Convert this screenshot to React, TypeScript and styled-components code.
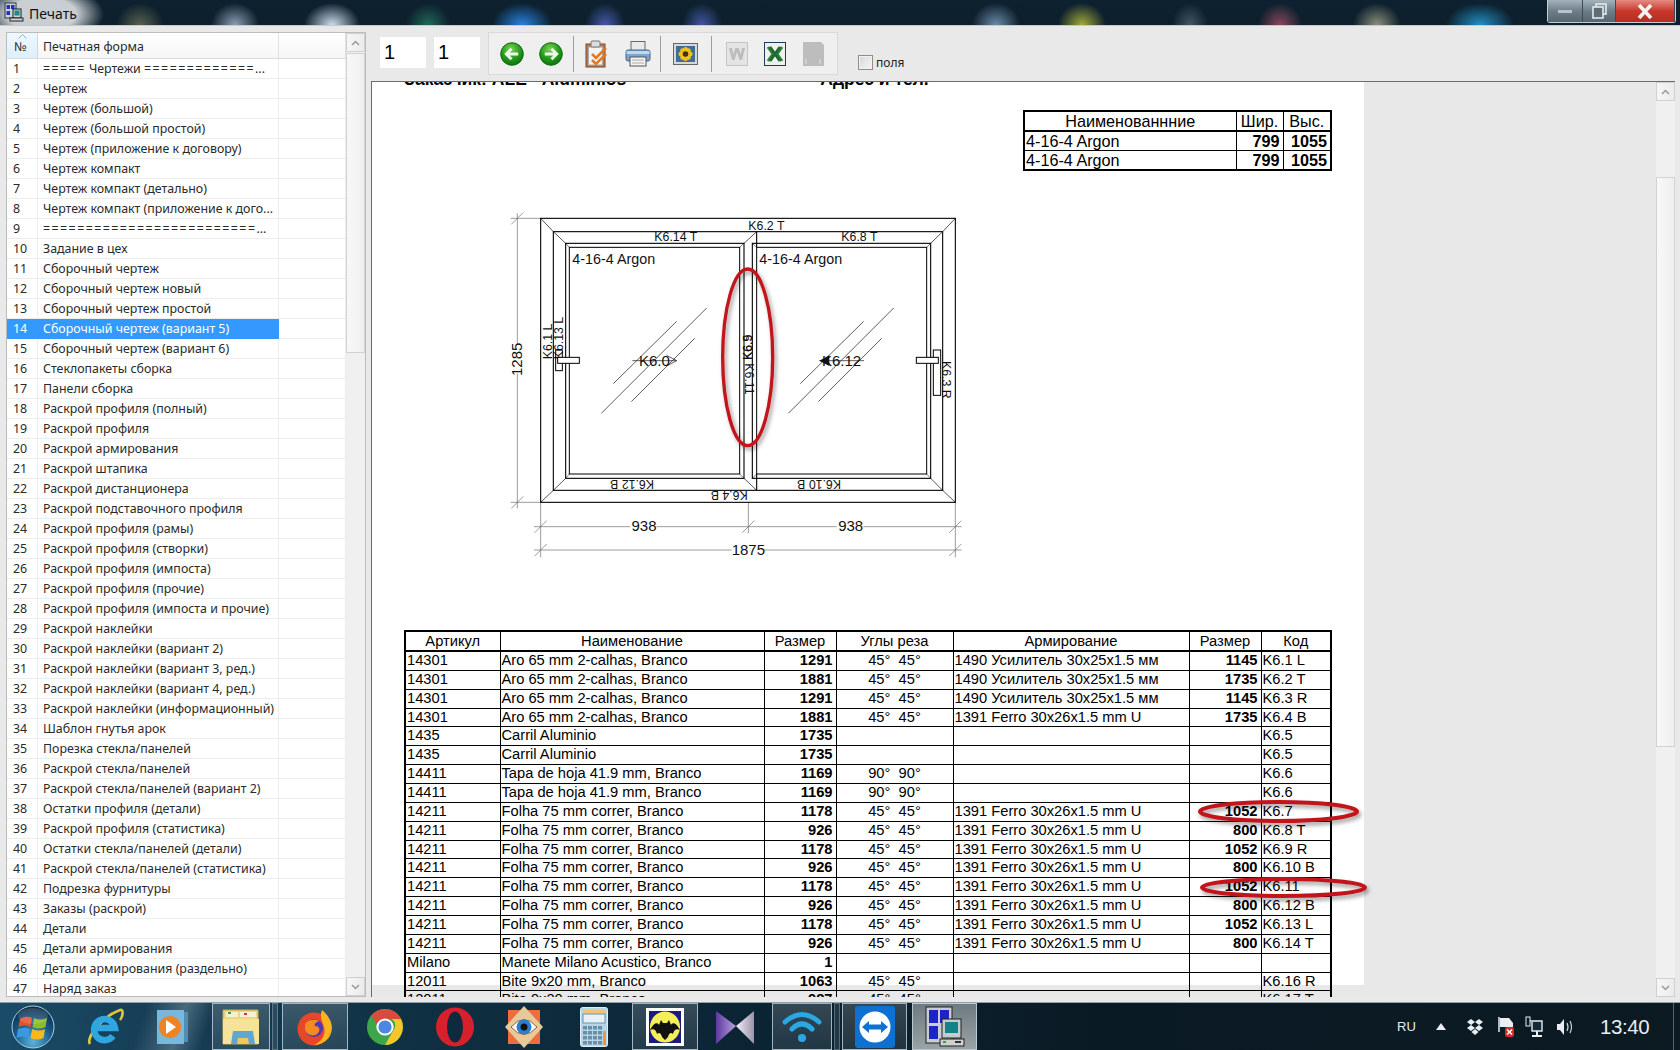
import React from "react";
import styled, { createGlobalStyle } from "styled-components";

const GlobalStyle = createGlobalStyle`
  html, body { margin: 0; padding: 0; width: 1680px; height: 1050px; overflow: hidden; background: #e9e9e9; }
  #root { width: 1680px; height: 1050px; }
  * { box-sizing: border-box; }
`;

const SANS = `"Liberation Sans", Arial, sans-serif`;
const UI = `"Noto Sans", "Liberation Sans", sans-serif`;

const blobs: [number, string, number][] = [
  [140, "rgba(150,150,110,.55)", 24],
  [235, "rgba(170,190,215,.8)", 24],
  [332, "rgba(215,232,248,.95)", 28],
  [428, "rgba(40,130,100,.75)", 22],
  [522, "rgba(40,130,225,1)", 30],
  [605, "rgba(80,100,190,.85)", 20],
  [702, "rgba(80,100,190,.8)", 20],
  [996, "rgba(130,165,200,.8)", 24],
  [1082, "rgba(190,195,60,.85)", 24],
  [1190, "rgba(90,110,125,.7)", 18],
  [1280, "rgba(170,80,105,.8)", 22],
  [1377, "rgba(170,170,145,.8)", 24],
  [1480, "rgba(35,150,205,.95)", 34],
];
const blobCss = blobs
  .map(([x, c, r]) => `radial-gradient(${r}px 22px at ${x}px 25px, ${c}, transparent)`)
  .join(",");

const Screen = styled.div`
  width: 1680px;
  height: 1050px;
  display: flex;
  flex-direction: column;
  overflow: hidden;
`;

const TitleBar = styled.header`
  height: 26px;
  flex: none;
  display: flex;
  align-items: flex-start;
  padding: 5px 4px 0 4px;
  border-bottom: 1px solid #c6cacc;
  background: radial-gradient(62px 30px at 42px 14px, rgba(205, 210, 214, 0.98) 55%, transparent), ${blobCss},
    linear-gradient(#0d2130, #0d1f2b);
`;
const TitleText = styled.span`
  font: 14px ${UI};
  line-height: 18px;
  color: #111;
  margin-left: 5px;
`;
const WindowControls = styled.div`
  margin: -5px 0 0 auto;
  display: flex;
  height: 23px;
  border: 1px solid #c5cdd3;
  border-top: none;
  border-radius: 0 0 3px 3px;
`;
const ControlButton = styled.div<{ $w: number; $kind: "plain" | "close" }>`
  width: ${(p) => p.$w}px;
  display: flex;
  align-items: center;
  justify-content: center;
  border-right: 1px solid #3b4a55;
  background: ${(p) =>
    p.$kind === "close"
      ? "linear-gradient(#e58a80, #c9382c 50%, #b92a20)"
      : "linear-gradient(#a5b2bb, #6d7e8a 50%, #55666f)"};
`;

const Workspace = styled.div`
  height: 976px;
  flex: none;
  display: flex;
  background: #e9e9e9;
`;

const ListPanel = styled.section`
  width: 360px;
  height: 965px;
  margin: 6px 0 0 6px;
  display: flex;
  border: 1px solid #bcbcbc;
  background: #fff;
  flex: none;
  overflow: hidden;
`;
const ListBody = styled.div`
  width: 339px;
  display: flex;
  flex-direction: column;
  font: 12.4px ${UI};
  color: #2a2a2a;
`;
const ListHeader = styled.div`
  height: 26px;
  flex: none;
  display: grid;
  grid-template-columns: 31px 241px 67px;
  border-bottom: 1px solid #dcdcdc;
`;
const HeaderCell = styled.div<{ $sorted?: boolean }>`
  position: relative;
  display: flex;
  align-items: center;
  padding-left: ${(p) => (p.$sorted ? 7 : 5)}px;
  padding-top: 1px;
  border-right: 1px solid ${(p) => (p.$sorted ? "#bcdcf2" : "#e2e2e2")};
  background: ${(p) =>
    p.$sorted ? "linear-gradient(#eef8ff, #dcf0fc)" : "linear-gradient(#fff, #f6f6f6)"};
`;
const SortMark = styled.svg`
  position: absolute;
  top: 1px;
  left: 11px;
`;
const ListRow = styled.div`
  height: 20px;
  flex: none;
  display: grid;
  grid-template-columns: 31px 241px 67px;
`;
const ListCell = styled.div<{ $selected?: boolean; $num?: boolean }>`
  padding-left: ${(p) => (p.$num ? 6 : 5)}px;
  line-height: 19px;
  white-space: nowrap;
  overflow: hidden;
  border-right: 1px solid ${(p) => (p.$selected ? "#3399ff" : "#ededed")};
  border-bottom: 1px solid ${(p) => (p.$selected ? "#3399ff" : "#ededed")};
  background: ${(p) => (p.$selected ? "#3399ff" : "#fff")};
  color: ${(p) => (p.$selected ? "#fff" : "inherit")};
`;
const EqualRun = styled.span`
  letter-spacing: 1.45px;
`;

const Scrollbar = styled.div<{ $w: number }>`
  width: ${(p) => p.$w}px;
  flex: none;
  display: flex;
  flex-direction: column;
  background: #f0f0f0;
`;
const ScrollButton = styled.div`
  height: 19px;
  flex: none;
  display: flex;
  align-items: center;
  justify-content: center;
  background: linear-gradient(90deg, #f6f6f6, #ebebeb);
  border: 1px solid #d0d0d0;
`;
const ScrollThumb = styled.div<{ $gap: number; $h: number }>`
  margin-top: ${(p) => p.$gap}px;
  height: ${(p) => p.$h}px;
  flex: none;
  background: linear-gradient(90deg, #f8f8f8, #efefef);
  border: 1px solid #d2d2d2;
`;
const ScrollTrack = styled.div`
  flex: 1;
`;

const RightColumn = styled.div`
  flex: 1;
  min-width: 0;
  display: flex;
  flex-direction: column;
`;
const Toolbar = styled.div`
  height: 55px;
  flex: none;
  display: flex;
  align-items: flex-start;
  padding: 6px 0 0 14px;
`;
const PageInput = styled.div<{ $gap: number }>`
  width: 46px;
  height: 31px;
  margin: 5px ${(p) => p.$gap}px 0 0;
  padding-left: 4px;
  display: flex;
  align-items: center;
  background: #fff;
  font: 20px ${SANS};
  color: #000;
`;
const ToolGroup = styled.div`
  width: 350px;
  height: 43px;
  margin-left: -2px;
  padding-left: 2px;
  display: flex;
  align-items: center;
  background: #efefef;
  border: 1px solid #d9d9d9;
`;
const ToolSlot = styled.div<{ $w: number }>`
  width: ${(p) => p.$w}px;
  height: 100%;
  display: flex;
  align-items: center;
  justify-content: center;
`;
const ToolSep = styled.div`
  width: 1px;
  height: 36px;
  background: #9c9c9c;
`;
const CheckWrap = styled.label`
  display: flex;
  align-items: center;
  gap: 3px;
  margin: 22px 0 0 20px;
  font: 12px ${UI};
  color: #222;
`;
const CheckBox = styled.span`
  width: 15px;
  height: 15px;
  border: 1px solid #8e8e8e;
  background: linear-gradient(135deg, #d8d8d8, #f6f6f6);
  box-shadow: inset 0 0 0 1px #f2f2f2;
`;

const DocArea = styled.div`
  height: 916px;
  margin-left: 5px;
  margin-right: 5px;
  display: flex;
  border-top: 1px solid #6b6b6b;
  border-left: 1px solid #6b6b6b;
`;
const PageViewport = styled.div`
  position: relative;
  flex: 1;
  min-width: 0;
  overflow: hidden;
  background: #e8e8e8;
`;
const Page = styled.div`
  width: 992px;
  height: 100%;
  padding-left: 32px;
  background: #fff;
`;
const ClippedHeading = styled.div`
  margin-top: -12px;
  height: 18px;
  display: flex;
  gap: 194px;
  font: bold 17.5px/18px ${SANS};
  color: #000;
  white-space: nowrap;
`;
const SmallTable = styled.table`
  margin: 22px 0 0 619px;
  width: 309px;
  table-layout: fixed;
  border-collapse: collapse;
  font: 16.2px/18px ${SANS};
  color: #000;
  border: 2px solid #000;
`;
const ReportHead = styled.th<{ $w?: number }>`
  width: ${(p) => (p.$w ? `${p.$w}px` : "auto")};
  height: 19px;
  padding: 0;
  font-weight: normal;
  text-align: center;
  border: 1px solid #000;
  border-bottom-width: 2px;
  white-space: nowrap;
  overflow: hidden;
`;
const ReportCell = styled.td<{ $bold?: boolean; $align?: "left" | "right" | "center" }>`
  height: 19px;
  padding: 0 ${(p) => (p.$bold ? 3 : 1)}px 0 1px;
  font-weight: ${(p) => (p.$bold ? "bold" : "normal")};
  text-align: ${(p) => p.$align ?? "left"};
  border: 1px solid #000;
  white-space: pre;
  overflow: hidden;
`;
const ReportRow = styled.tr<{ $short?: boolean }>`
  & td {
    height: ${(p) => (p.$short ? 18 : 19)}px;
  }
`;
const Drawing = styled.svg`
  display: block;
  margin: 29px 0 0 86px;
  overflow: visible;
`;
const DrawingText = styled.text<{ $size: number }>`
  font-family: ${SANS};
  font-size: ${(p) => p.$size}px;
  fill: #111;
`;
const MainTable = styled.table`
  margin-top: 60px;
  width: 926px;
  table-layout: fixed;
  border-collapse: collapse;
  font: 14.7px/17px ${SANS};
  color: #000;
  border: 2px solid #000;
  & th {
    height: 20px;
  }
`;
const RedMark = styled.svg<{ $x: number; $y: number }>`
  position: absolute;
  left: ${(p) => p.$x}px;
  top: ${(p) => p.$y}px;
  overflow: visible;
  filter: drop-shadow(2px 3px 2px rgba(0, 0, 0, 0.4));
`;

const Taskbar = styled.footer`
  height: 48px;
  flex: none;
  display: flex;
  align-items: stretch;
  border-top: 1px solid #8fa1ad;
  background: linear-gradient(108deg, transparent 140px, rgba(170, 190, 200, 0.35) 178px, transparent 205px),
    linear-gradient(90deg, #1a4c68 0, #174059 120px, #0f3042 420px, #0b2434 760px, #0a1a24 1100px, #0c1a22 1680px);
`;
const TaskItem = styled.div<{ $w: number; $ml?: number; $state?: "active" | "open" }>`
  width: ${(p) => p.$w}px;
  margin-left: ${(p) => p.$ml ?? 0}px;
  flex: none;
  display: flex;
  align-items: center;
  justify-content: center;
  border: ${(p) => (p.$state ? "1px solid rgba(205,220,228,.75)" : "1px solid transparent")};
  background: ${(p) =>
    p.$state === "active"
      ? "linear-gradient(#6d7a80, #9aa3a6)"
      : p.$state === "open"
        ? "linear-gradient(rgba(255,255,255,.17), rgba(255,255,255,.09))"
        : "none"};
`;
const TaskGrip = styled.div<{ $ml: number }>`
  width: 6px;
  margin-left: ${(p) => p.$ml}px;
  flex: none;
  border: 1px solid rgba(190, 205, 215, 0.35);
  background: rgba(255, 255, 255, 0.1);
`;
const Tray = styled.div`
  margin-left: auto;
  display: flex;
  align-items: center;
  color: #e8eef2;
`;
const TrayLang = styled.span`
  font: 13px ${SANS};
  width: 36px;
`;
const TrayIcon = styled.span<{ $w: number; $ml?: number }>`
  width: ${(p) => p.$w}px;
  margin-left: ${(p) => p.$ml ?? 0}px;
  display: flex;
  justify-content: center;
`;
const Clock = styled.time`
  width: 75px;
  font: 20.5px ${SANS};
  letter-spacing: -0.4px;
  padding-left: 25px;
  margin-right: 23px;
  white-space: nowrap;
`;
const ShowDesktop = styled.div`
  width: 7px;
  align-self: stretch;
  border-left: 1px solid #55656f;
`;

const listItems = [
  "===== Чертежи =============...",
  "Чертеж",
  "Чертеж (большой)",
  "Чертеж (большой простой)",
  "Чертеж (приложение к договору)",
  "Чертеж компакт",
  "Чертеж компакт (детально)",
  "Чертеж компакт (приложение к дого...",
  "=========================...",
  "Задание в цех",
  "Сборочный чертеж",
  "Сборочный чертеж новый",
  "Сборочный чертеж простой",
  "Сборочный чертеж (вариант 5)",
  "Сборочный чертеж (вариант 6)",
  "Стеклопакеты сборка",
  "Панели сборка",
  "Раскрой профиля (полный)",
  "Раскрой профиля",
  "Раскрой армирования",
  "Раскрой штапика",
  "Раскрой дистанционера",
  "Раскрой подставочного профиля",
  "Раскрой профиля (рамы)",
  "Раскрой профиля (створки)",
  "Раскрой профиля (импоста)",
  "Раскрой профиля (прочие)",
  "Раскрой профиля (импоста и прочие)",
  "Раскрой наклейки",
  "Раскрой наклейки (вариант 2)",
  "Раскрой наклейки (вариант 3, ред.)",
  "Раскрой наклейки (вариант 4, ред.)",
  "Раскрой наклейки (информационный)",
  "Шаблон гнутья арок",
  "Порезка стекла/панелей",
  "Раскрой стекла/панелей",
  "Раскрой стекла/панелей (вариант 2)",
  "Остатки профиля (детали)",
  "Раскрой профиля (статистика)",
  "Остатки стекла/панелей (детали)",
  "Раскрой стекла/панелей (статистика)",
  "Подрезка фурнитуры",
  "Заказы (раскрой)",
  "Детали",
  "Детали армирования",
  "Детали армирования (раздельно)",
  "Наряд заказ",
];

const A65 = "Aro 65 mm 2-calhas, Branco";
const F75 = "Folha 75 mm correr, Branco";
const TAP = "Tapa de hoja 41.9 mm, Branco";
const USI = "1490 Усилитель 30x25x1.5 мм";
const FER = "1391 Ferro 30x26x1.5 mm U";
const ANG = "45°  45°";
const ANG9 = "90°  90°";
const rows: string[][] = [
  ["14301", A65, "1291", ANG, USI, "1145", "K6.1 L"],
  ["14301", A65, "1881", ANG, USI, "1735", "K6.2 T"],
  ["14301", A65, "1291", ANG, USI, "1145", "K6.3 R"],
  ["14301", A65, "1881", ANG, FER, "1735", "K6.4 B"],
  ["1435", "Carril Aluminio", "1735", "", "", "", "K6.5"],
  ["1435", "Carril Aluminio", "1735", "", "", "", "K6.5"],
  ["14411", TAP, "1169", ANG9, "", "", "K6.6"],
  ["14411", TAP, "1169", ANG9, "", "", "K6.6"],
  ["14211", F75, "1178", ANG, FER, "1052", "K6.7"],
  ["14211", F75, "926", ANG, FER, "800", "K6.8 T"],
  ["14211", F75, "1178", ANG, FER, "1052", "K6.9 R"],
  ["14211", F75, "926", ANG, FER, "800", "K6.10 B"],
  ["14211", F75, "1178", ANG, FER, "1052", "K6.11"],
  ["14211", F75, "926", ANG, FER, "800", "K6.12 B"],
  ["14211", F75, "1178", ANG, FER, "1052", "K6.13 L"],
  ["14211", F75, "926", ANG, FER, "800", "K6.14 T"],
  ["Milano", "Manete Milano Acustico, Branco", "1", "", "", "", ""],
  ["12011", "Bite 9x20 mm, Branco", "1063", ANG, "", "", "K6.16 R"],
  ["12011", "Bite 9x20 mm, Branco", "987", ANG, "", "", "K6.17 T"],
];
const heads: [string, number][] = [
  ["Артикул", 95],
  ["Наименование", 264],
  ["Размер", 72],
  ["Углы реза", 117],
  ["Армирование", 236],
  ["Размер", 72],
  ["Код", 70],
];

const Chevron = ({ up }: { up?: boolean }) => (
  <svg width="9" height="6" viewBox="0 0 9 6">
    <path d={up ? "M1 5 L4.5 1.5 L8 5" : "M1 1 L4.5 4.5 L8 1"} fill="none" stroke="#9a9a9a" strokeWidth="1.5" />
  </svg>
);

const TitleIcon = () => (
  <svg width="20" height="20" viewBox="0 0 20 20" style={{ marginTop: -3 }}>
    <rect x="1" y="1" width="11" height="15" fill="#cfd4d8" stroke="#333" />
    <rect x="2.5" y="3" width="3.5" height="4" fill="#2030c8" />
    <rect x="7" y="3" width="3.5" height="4" fill="#2030c8" />
    <rect x="2.5" y="9" width="3.5" height="4" fill="#2030c8" />
    <rect x="9" y="7" width="8" height="9" fill="#c8d0d4" stroke="#222" />
    <rect x="10.5" y="8.5" width="5" height="5" fill="#188a90" />
    <rect x="6" y="16" width="13" height="3" fill="#d4d4d4" stroke="#222" />
  </svg>
);

const ArrowBall = ({ dir }: { dir: "l" | "r" }) => (
  <svg width="24" height="24" viewBox="0 0 25 25">
    <defs>
      <radialGradient id={`gb${dir}`} cx="45%" cy="30%" r="75%">
        <stop offset="0" stopColor="#7ed35a" />
        <stop offset="0.55" stopColor="#259a1c" />
        <stop offset="1" stopColor="#0a6d10" />
      </radialGradient>
    </defs>
    <circle cx="12.5" cy="12.5" r="11.8" fill={`url(#gb${dir})`} stroke="#0f6b12" />
    <path
      d={dir === "l" ? "M19 12.5 H7.5 M12 7 L6.5 12.5 L12 18" : "M6 12.5 H17.5 M13 7 L18.5 12.5 L13 18"}
      fill="none"
      stroke="#eef8e8"
      strokeWidth="3"
    />
  </svg>
);
const ClipboardIcon = () => (
  <svg width="26" height="30" viewBox="0 0 26 30">
    <rect x="2" y="5" width="19" height="23" fill="#b87a50" stroke="#7a4a2c" />
    <rect x="4.5" y="8" width="14" height="18" fill="#f2f2f2" stroke="#a8a8a8" />
    <rect x="7" y="2" width="9" height="6" rx="1" fill="#dcdcdc" stroke="#777" />
    <path d="M8 15 L12 19 L22 9 M8 21 L12 25 L22 15" fill="none" stroke="#e07a28" strokeWidth="2.6" />
  </svg>
);
const PrinterIcon = () => (
  <svg width="26" height="28" viewBox="0 0 26 28">
    <rect x="6" y="1.5" width="14" height="10" fill="#e9e9e9" stroke="#666" />
    <rect x="1" y="10" width="24" height="11" rx="2" fill="#7fa6c8" stroke="#40688c" />
    <rect x="1.5" y="11" width="23" height="3" fill="#c3d7e8" />
    <rect x="5" y="17" width="16" height="9" fill="#f4f4f4" stroke="#555" />
    <path d="M7 20 H19 M7 23 H19" stroke="#aaa" />
  </svg>
);
const SunflowerIcon = () => (
  <svg width="25" height="22" viewBox="0 0 25 22">
    <rect x="0.5" y="0.5" width="24" height="21" fill="#d8d8d8" stroke="#666" />
    <rect x="3" y="3" width="19" height="16" fill="#406c95" />
    <g fill="#f2c316">
      <circle cx="12.5" cy="6.5" r="2.5" />
      <circle cx="12.5" cy="15.5" r="2.5" />
      <circle cx="8" cy="11" r="2.5" />
      <circle cx="17" cy="11" r="2.5" />
      <circle cx="9.5" cy="7.5" r="2.3" />
      <circle cx="15.5" cy="7.5" r="2.3" />
      <circle cx="9.5" cy="14.5" r="2.3" />
      <circle cx="15.5" cy="14.5" r="2.3" />
    </g>
    <circle cx="12.5" cy="11" r="2.8" fill="#4a3016" />
  </svg>
);
const WordOff = () => (
  <svg width="22" height="24" viewBox="0 0 22 24">
    <rect x="0.5" y="0.5" width="21" height="23" fill="#e4e4e4" stroke="#c4c4c4" />
    <path d="M3 6 L6 18 H8.5 L11 10 L13.5 18 H16 L19 6 H16 L14.8 12 L12.5 6 H9.5 L7.2 12 L6 6 Z" fill="#bdbdbd" />
  </svg>
);
const ExcelIcon = () => (
  <svg width="22" height="24" viewBox="0 0 22 24">
    <rect x="0.5" y="0.5" width="21" height="23" fill="#eef2ee" stroke="#1e3a5c" />
    <path d="M4 5 L9 12 L4 19 M18 5 L13 12 L18 19" fill="none" stroke="#38803c" strokeWidth="3" />
    <path d="M6 5 L16 19 M16 5 L6 19" stroke="#1f6a33" strokeWidth="3" />
  </svg>
);
const DiskOff = () => (
  <svg width="21" height="25" viewBox="0 0 21 25">
    <path d="M0 1 H18 L21 4 V25 H0 Z" fill="#bdbdbd" />
    <path d="M3 18 V23 M17 18 V23" stroke="#e0e0e0" />
  </svg>
);

const StartOrb = () => (
  <svg width="44" height="44" viewBox="0 0 44 44">
    <defs>
      <radialGradient id="orb" cx="50%" cy="85%" r="80%">
        <stop offset="0" stopColor="#5bb4dc" />
        <stop offset="0.55" stopColor="#1c5c8c" />
        <stop offset="1" stopColor="#0c2c48" />
      </radialGradient>
    </defs>
    <circle cx="22" cy="22" r="21" fill="url(#orb)" stroke="#a9d0e4" strokeWidth="1" />
    <path d="M9 14 Q15 10 21 13 L19.5 22 Q14 19 7.5 22 Z" fill="#e8502c" />
    <path d="M23 13 Q29 16 36 13 L34.5 22 Q28 25 21.5 22 Z" fill="#8ebc2a" />
    <path d="M7 24 Q14 21 19 24 L17.5 33 Q11 30 5.5 33 Z" fill="#3a9ae0" />
    <path d="M21 24 Q28 27 34 24 L32.5 33 Q26 36 19.5 33 Z" fill="#f5b81e" />
    <ellipse cx="22" cy="11" rx="15" ry="8" fill="rgba(255,255,255,.14)" />
  </svg>
);
const IeIcon = () => (
  <svg width="40" height="40" viewBox="0 0 40 40">
    <path d="M5 37 C1 31 16 10 35 3 C39 2 38 9 35 13" fill="none" stroke="#e0c43a" strokeWidth="2.6" />
    <path d="M11 21 H30 A10.5 10.5 0 1 0 28 29" fill="none" stroke="#2ea7e0" strokeWidth="6.5" />
  </svg>
);
const WmpIcon = () => (
  <svg width="34" height="36" viewBox="0 0 34 36">
    <rect x="28" y="3" width="5" height="30" fill="#4e90b4" />
    <rect x="2" y="1" width="27" height="34" fill="#79b8dc" />
    <circle cx="15" cy="18" r="11" fill="#ec8426" />
    <path d="M11 11 L21 18 L11 25 Z" fill="#fff" />
  </svg>
);
const FolderIcon = () => (
  <svg width="42" height="40" viewBox="0 0 42 40">
    <path d="M3 3 H38 V37 H3 Z" fill="#eed680" stroke="#c5a850" />
    <rect x="6" y="5" width="12" height="5" fill="#f5f1d8" />
    <rect x="20" y="5" width="16" height="5" fill="#f5f1d8" />
    <rect x="8" y="5" width="3" height="2" fill="#3ca03c" />
    <rect x="24" y="6" width="3" height="2" fill="#d83030" />
    <path d="M3 12 H39 V37 H3 Z" fill="#f6e39a" />
    <path d="M11 37 L13 24 H33 L35 37" fill="#5fa6d4" />
    <path d="M17 37 L18 31 H28 L29 37" fill="#eec95a" />
  </svg>
);
const FirefoxIcon = () => (
  <svg width="38" height="38" viewBox="0 0 38 38">
    <circle cx="18" cy="21" r="16.5" fill="#e8462a" />
    <path d="M26 2 C33 8 38 16 35 25 C33 33 24 37 18 37 C27 33 31 25 27 16 C25 11 24 6 26 2 Z" fill="#f9b41f" />
    <circle cx="18" cy="20" r="9" fill="#4d3bb4" />
    <path d="M9 16 C12 11 20 11 23 13 C20 14 18 16 19 18 C24 18 25 23 21 26 C17 29 11 27 9 22 Z" fill="#f58a1e" />
  </svg>
);
const ChromeIcon = () => (
  <svg width="38" height="38" viewBox="0 0 38 38">
    <circle cx="19" cy="19" r="18" fill="#3ea64a" />
    <path d="M19 1 A18 18 0 0 1 35 11 H19 A8 8 0 0 0 11.5 16 L5 8 A18 18 0 0 1 19 1 Z" fill="#d94c3d" />
    <path d="M35 11 A18 18 0 0 1 19 37 L27 23 A8 8 0 0 0 26 11 Z" fill="#f5c52c" />
    <circle cx="19" cy="19" r="8.6" fill="#fff" />
    <circle cx="19" cy="19" r="6.6" fill="#4b88e6" />
  </svg>
);
const OperaIcon = () => (
  <svg width="40" height="40" viewBox="0 0 40 40">
    <ellipse cx="20" cy="20" rx="19" ry="19.5" fill="#d7202c" />
    <ellipse cx="20" cy="20" rx="8" ry="15.5" fill="#0f2a3c" />
  </svg>
);
const EyeIcon = () => (
  <svg width="40" height="42" viewBox="0 0 40 42">
    <rect x="4" y="4" width="32" height="34" fill="#ee6c3e" />
    <path d="M20 0 L39 21 L20 42 L1 21 Z" fill="#e8c998" />
    <path d="M7 21 Q20 6 33 21 Q20 36 7 21 Z" fill="#fff" stroke="#8a5a2c" />
    <circle cx="20" cy="21" r="7.5" fill="#2c7fd0" />
    <circle cx="20" cy="21" r="3.5" fill="#111" />
  </svg>
);
const CalcIcon = () => (
  <svg width="28" height="40" viewBox="0 0 28 40">
    <rect x="0.5" y="0.5" width="27" height="39" rx="2" fill="#b5d6e8" stroke="#e0eef5" />
    <rect x="3" y="3" width="22" height="3" fill="#f3c27a" />
    <rect x="3" y="7" width="22" height="9" fill="#e6f1f7" stroke="#6b93ab" />
    <g fill="#6a8ea6">
      {[19, 24, 29, 34].flatMap((y) =>
        [3, 8, 13, 18].map((x) => <rect key={`${x}-${y}`} x={x} y={y} width="4" height="3.5" />)
      )}
    </g>
    <rect x="23" y="24" width="3" height="14" fill="#ec9a3c" />
  </svg>
);
const BatIcon = () => (
  <svg width="38" height="38" viewBox="0 0 38 38">
    <rect x="0" y="0" width="38" height="38" fill="#fff" />
    <rect x="3" y="3" width="32" height="32" fill="#1a1a80" />
    <ellipse cx="19" cy="19" rx="15" ry="15.5" fill="#f4ee5a" />
    <path d="M4 22 C8 14 12 14 13 17 L15 12 L17 15 H21 L23 12 L25 17 C26 14 30 14 34 22 C30 20 28 22 27 26 C25 24 23 25 22 29 L19 32 L16 29 C15 25 13 24 11 26 C10 22 8 20 4 22 Z" fill="#111" />
  </svg>
);
const VsIcon = () => (
  <svg width="40" height="38" viewBox="0 0 40 38">
    <defs>
      <linearGradient id="vsl" x1="0" x2="1">
        <stop offset="0" stopColor="#5c3aa0" />
        <stop offset="1" stopColor="#b8a0dc" />
      </linearGradient>
      <linearGradient id="vsr" x1="0" x2="1">
        <stop offset="0" stopColor="#f2eef8" />
        <stop offset="1" stopColor="#9c92aa" />
      </linearGradient>
    </defs>
    <path d="M1 3 L21 18 L1 36 Z" fill="url(#vsl)" />
    <path d="M39 3 L21 18 L39 36 Z" fill="url(#vsr)" />
  </svg>
);
const WifiIcon = () => (
  <svg width="40" height="34" viewBox="0 0 40 34">
    <path d="M3 12 Q20 -3 37 12 M10 19 Q20 9 30 19" fill="none" stroke="#2aa8e4" strokeWidth="5" strokeLinecap="round" />
    <circle cx="20" cy="28" r="4" fill="#2aa8e4" />
  </svg>
);
const TeamViewerIcon = () => (
  <svg width="40" height="42" viewBox="0 0 40 42">
    <rect x="0" y="0" width="40" height="42" rx="3" fill="#0e70d1" />
    <circle cx="20" cy="21" r="15.5" fill="#fff" />
    <path d="M7 21 L14 15 V18.5 H26 V15 L33 21 L26 27 V23.5 H14 V27 Z" fill="#0e70d1" />
  </svg>
);
const ComputerIcon = () => (
  <svg width="42" height="42" viewBox="0 0 42 42">
    <rect x="2" y="1" width="26" height="36" fill="#c9cdd0" stroke="#222" />
    <rect x="5" y="4" width="9" height="13" fill="#1c24c8" />
    <rect x="16" y="4" width="9" height="13" fill="#1c24c8" />
    <rect x="5" y="20" width="9" height="13" fill="#1c24c8" />
    <rect x="18" y="13" width="19" height="19" fill="#c5cbce" stroke="#222" />
    <rect x="21" y="16" width="13" height="11" fill="#128488" />
    <rect x="16" y="33" width="24" height="7" fill="#d0d0d0" stroke="#222" />
    <rect x="31" y="35" width="6" height="2" fill="#333" />
    <rect x="19" y="35" width="3" height="2" fill="#38a038" />
  </svg>
);

const TrayDropbox = () => (
  <svg width="18" height="18" viewBox="0 0 18 18" fill="#e8eef2">
    <path d="M5 1 L9 4 L5 7 L1 4 Z M13 1 L17 4 L13 7 L9 4 Z M5 7 L9 10 L5 13 L1 10 Z M13 7 L17 10 L13 13 L9 10 Z M9 11 L12.5 14 L9 17 L5.5 14 Z" />
  </svg>
);
const TrayFlag = () => (
  <svg width="18" height="22" viewBox="0 0 18 22">
    <path d="M2 1 V16" stroke="#e8eef2" strokeWidth="1.5" />
    <path d="M3 2 H12 L16 7 V11 H3 Z" fill="#e8eef2" />
    <rect x="8" y="11" width="9" height="10" rx="2" fill="#d32a2a" />
    <path d="M10 13.5 L15 18.5 M15 13.5 L10 18.5" stroke="#fff" strokeWidth="1.5" />
  </svg>
);
const TrayNet = () => (
  <svg width="20" height="22" viewBox="0 0 20 22">
    <rect x="2" y="1" width="4" height="9" fill="none" stroke="#e8eef2" />
    <path d="M6 5 H18 V15 H8 V6" fill="#152a36" stroke="#e8eef2" strokeWidth="1.4" />
    <path d="M13 15 V19 M8 20 H18" stroke="#e8eef2" strokeWidth="2" />
  </svg>
);
const TraySound = () => (
  <svg width="20" height="22" viewBox="0 0 20 22" fill="none">
    <path d="M3 8 H6 L10 3 V19 L6 14 H3 Z" fill="#e8eef2" />
    <path d="M13 7 Q15 11 13 15 M16 5 Q19 11 16 17" stroke="#c8d2d8" strokeWidth="1.2" />
  </svg>
);

const WindowDrawing = () => {
  const dim = "#6a6a6a";
  const ticks: [number, number][] = [
    [82, 55], [82, 907],
    [152, 980], [775, 980], [1396, 980],
    [152, 1050], [1396, 1050],
  ];
  return (
    <Drawing width="500" height="370" viewBox="0 0 1500 1110">
      <defs>
        <filter id="markShadow" x="-30%" y="-10%" width="160%" height="120%">
          <feDropShadow dx="6" dy="8" stdDeviation="6" floodColor="#000" floodOpacity="0.4" />
        </filter>
      </defs>
      <g stroke={dim} strokeWidth="2" fill="none">
        <path d="M62 55 H152 M62 907 H152" />
        <path d="M82 40 V435 M82 520 V925" />
        <path d="M152 907 V1072 M775 907 V1000 M1396 907 V1072" />
        <path d="M132 980 H420 M500 980 H1040 M1120 980 H1415" />
        <path d="M132 1050 H725 M822 1050 H1415" />
        {ticks.map(([x, y]) => (
          <path key={`${x}-${y}`} d={`M${x - 18} ${y + 18} L${x + 18} ${y - 18}`} />
        ))}
      </g>
      <g stroke="#000" strokeWidth="3.3" fill="none">
        <rect x="152" y="55" width="1244" height="852" />
        <rect x="190" y="95" width="1168" height="776" />
        <rect x="227" y="130" width="535" height="705" />
        <rect x="238" y="142" width="511" height="680" strokeWidth="3" />
        <rect x="787" y="130" width="535" height="705" />
        <rect x="800" y="142" width="510" height="680" strokeWidth="3" />
        <path d="M800 95 V142 M800 822 V871" />
        <path d="M152 55 L190 95 M1396 55 L1358 95 M152 907 L190 871 M1396 907 L1358 871" strokeWidth="2" />
        <path d="M190 95 L227 130 M190 871 L227 835 M800 95 L762 130 M800 871 L762 835 M1358 95 L1322 130 M1358 871 L1322 835" strokeWidth="2" />
        <path d="M227 130 L238 142 M227 835 L238 822 M762 130 L749 142 M762 835 L749 822 M787 130 L800 142 M787 835 L800 822 M1322 130 L1310 142 M1322 835 L1310 822" strokeWidth="1.5" />
      </g>
      <g stroke="#222" strokeWidth="2.2" fill="none">
        <path d="M334 640 L650 324 M370 551 L560 364 M424 605 L614 415" />
        <path d="M895 640 L1211 324 M931 551 L1121 364 M985 605 L1175 415" />
        <path d="M427 482 H560 M530 466 L560 482 L530 498" />
        <path d="M988 482 H1122" />
      </g>
      <path d="M988 482 L1018 466 V498 Z" fill="#111" />
      <DrawingText $size={43} x="247" y="191">4-16-4 Argon</DrawingText>
      <DrawingText $size={43} x="808" y="191">4-16-4 Argon</DrawingText>
      <DrawingText $size={45} x="447" y="498">K6.0</DrawingText>
      <DrawingText $size={45} x="996" y="498">K6.12</DrawingText>
      <DrawingText $size={37} x="775" y="89">K6.2 T</DrawingText>
      <DrawingText $size={37} x="493" y="123">K6.14 T</DrawingText>
      <DrawingText $size={37} x="1054" y="123">K6.8 T</DrawingText>
      <DrawingText $size={37} transform="rotate(180 492 852)" x="492" y="864">K6.12 B</DrawingText>
      <DrawingText $size={37} transform="rotate(180 1053 852)" x="1053" y="864">K6.10 B</DrawingText>
      <DrawingText $size={37} transform="rotate(180 773 885)" x="773" y="897">K6.4 B</DrawingText>
      <DrawingText $size={37} transform="rotate(-90 186 478)" x="186" y="478">K6.1 L</DrawingText>
      <DrawingText $size={37} transform="rotate(-90 218 478)" x="218" y="478">K6.13 L</DrawingText>
      <DrawingText $size={37} transform="rotate(90 1355 483)" x="1355" y="483">K6.3 R</DrawingText>
      <DrawingText $size={37} transform="rotate(90 765 490)" x="765" y="490">K6.11</DrawingText>
      <DrawingText $size={37} transform="rotate(-90 785 480)" x="785" y="480">K6.9</DrawingText>
      <DrawingText $size={37} transform="rotate(-90 787 480)" x="787" y="480">K6.5</DrawingText>
      <g stroke="#000" strokeWidth="3" fill="#fff">
        <rect x="197" y="450" width="20" height="62" fillOpacity="0" />
        <rect x="203" y="472" width="65" height="18" />
        <rect x="1330" y="450" width="22" height="136" fillOpacity="0" />
        <rect x="1279" y="472" width="66" height="18" />
      </g>
      <DrawingText $size={45} transform="rotate(-90 97 478)" x="97" y="478" textAnchor="middle">1285</DrawingText>
      <DrawingText $size={45} x="462" y="994" textAnchor="middle">938</DrawingText>
      <DrawingText $size={45} x="1082" y="994" textAnchor="middle">938</DrawingText>
      <DrawingText $size={45} x="775" y="1065" textAnchor="middle">1875</DrawingText>
      <ellipse cx="773" cy="472" rx="75" ry="265" fill="none" stroke="#c3141b" strokeWidth="10" filter="url(#markShadow)" />
    </Drawing>
  );
};

const TableMark = ({ x, y, w, h }: { x: number; y: number; w: number; h: number }) => (
  <RedMark $x={x} $y={y} width={w} height={h} viewBox={`0 0 ${w} ${h}`}>
    <ellipse cx={w / 2} cy={h / 2} rx={w / 2 - 2} ry={h / 2 - 2} fill="none" stroke="#c3141b" strokeWidth="4" />
  </RedMark>
);

const tools: { w: number; el?: React.ReactNode }[] = [
  { w: 43, el: <ArrowBall dir="l" /> },
  { w: 35, el: <ArrowBall dir="r" /> },
  { w: 4, el: <></> },
  { w: 0 },
  { w: 47, el: <ClipboardIcon /> },
  { w: 36, el: <PrinterIcon /> },
  { w: 4, el: <></> },
  { w: 0 },
  { w: 50, el: <SunflowerIcon /> },
  { w: 0 },
  { w: 50, el: <WordOff /> },
  { w: 28, el: <ExcelIcon /> },
  { w: 48, el: <DiskOff /> },
];

const ListLabel = ({ text }: { text: string }) => (
  <>
    {text.split(/(=+)/).map((part, i) =>
      part.startsWith("=") ? <EqualRun key={i}>{part}</EqualRun> : part
    )}
  </>
);

export default function App() {
  return (
    <>
      <GlobalStyle />
      <Screen>
        <TitleBar>
          <TitleIcon />
          <TitleText>Печать</TitleText>
          <WindowControls>
            <ControlButton $w={35} $kind="plain">
              <svg width="14" height="6" viewBox="0 0 14 6"><rect x="0" y="2" width="14" height="3" fill="#b9c2c8" /></svg>
            </ControlButton>
            <ControlButton $w={33} $kind="plain">
              <svg width="15" height="16" viewBox="0 0 15 16" fill="none" stroke="#e4e9ec" strokeWidth="1.6">
                <rect x="4" y="1" width="10" height="10" />
                <rect x="1" y="4" width="10" height="11" fill="#5d6e78" />
              </svg>
            </ControlButton>
            <ControlButton $w={59} $kind="close">
              <svg width="16" height="15" viewBox="0 0 16 15">
                <path d="M2 1 L14 14 M14 1 L2 14" stroke="#f4f4f4" strokeWidth="3.6" />
              </svg>
            </ControlButton>
          </WindowControls>
        </TitleBar>

        <Workspace>
          <ListPanel>
            <ListBody>
              <ListHeader>
                <HeaderCell $sorted>
                  <SortMark width="9" height="5" viewBox="0 0 9 5">
                    <path d="M0.5 4.5 L4.5 0.5 L8.5 4.5" fill="none" stroke="#8fb2c8" />
                  </SortMark>
                  №
                </HeaderCell>
                <HeaderCell>Печатная форма</HeaderCell>
                <HeaderCell />
              </ListHeader>
              {listItems.map((t, i) => (
                <ListRow key={i}>
                  <ListCell $num $selected={i === 13}>{i + 1}</ListCell>
                  <ListCell $selected={i === 13}><ListLabel text={t} /></ListCell>
                  <ListCell />
                </ListRow>
              ))}
            </ListBody>
            <Scrollbar $w={19}>
              <ScrollButton><Chevron up /></ScrollButton>
              <ScrollThumb $gap={1} $h={300} />
              <ScrollTrack />
              <ScrollButton><Chevron /></ScrollButton>
            </Scrollbar>
          </ListPanel>

          <RightColumn>
            <Toolbar>
              <PageInput $gap={8}>1</PageInput>
              <PageInput $gap={10}>1</PageInput>
              <ToolGroup>
                {tools.map((t, i) =>
                  t.el ? <ToolSlot key={i} $w={t.w}>{t.el}</ToolSlot> : <ToolSep key={i} />
                )}
              </ToolGroup>
              <CheckWrap>
                <CheckBox />
                поля
              </CheckWrap>
            </Toolbar>
            <DocArea>
              <PageViewport>
                <Page>
                  <ClippedHeading>
                    <span>Заказчик: ALE - Aluminios</span>
                    <span>Адрес и тел.</span>
                  </ClippedHeading>
                  <SmallTable>
                    <thead>
                      <tr>
                        <ReportHead>Наименованнние</ReportHead>
                        <ReportHead $w={47}>Шир.</ReportHead>
                        <ReportHead $w={48}>Выс.</ReportHead>
                      </tr>
                    </thead>
                    <tbody>
                      {[0, 1].map((i) => (
                        <tr key={i}>
                          <ReportCell>4-16-4 Argon</ReportCell>
                          <ReportCell $bold $align="right">799</ReportCell>
                          <ReportCell $bold $align="right">1055</ReportCell>
                        </tr>
                      ))}
                    </tbody>
                  </SmallTable>
                  <WindowDrawing />
                  <MainTable>
                    <thead>
                      <tr>
                        {heads.map(([h, w], i) => (
                          <ReportHead key={i} $w={w}>{h}</ReportHead>
                        ))}
                      </tr>
                    </thead>
                    <tbody>
                      {rows.map((r, i) => (
                        <ReportRow key={i} $short={i % 7 === 3}>
                          <ReportCell>{r[0]}</ReportCell>
                          <ReportCell>{r[1]}</ReportCell>
                          <ReportCell $bold $align="right">{r[2]}</ReportCell>
                          <ReportCell $align="center">{r[3]}</ReportCell>
                          <ReportCell>{r[4]}</ReportCell>
                          <ReportCell $bold $align="right">{r[5]}</ReportCell>
                          <ReportCell>{r[6]}</ReportCell>
                        </ReportRow>
                      ))}
                    </tbody>
                  </MainTable>
                </Page>
                <TableMark x={826} y={718} w={161} h={23} />
                <TableMark x={828} y={795} w={167} h={21} />
              </PageViewport>
              <Scrollbar $w={19}>
                <ScrollButton><Chevron up /></ScrollButton>
                <ScrollThumb $gap={76} $h={570} />
                <ScrollTrack />
                <ScrollButton><Chevron /></ScrollButton>
              </Scrollbar>
            </DocArea>
          </RightColumn>
        </Workspace>

        <Taskbar>
          <TaskItem $w={66}><StartOrb /></TaskItem>
          <TaskItem $w={66} $ml={6}><IeIcon /></TaskItem>
          <TaskItem $w={66} $ml={1}><WmpIcon /></TaskItem>
          <TaskItem $w={58} $ml={7} $state="open"><FolderIcon /></TaskItem>
          <TaskGrip $ml={2} />
          <TaskItem $w={66} $ml={4} $state="open"><FirefoxIcon /></TaskItem>
          <TaskItem $w={66} $ml={4}><ChromeIcon /></TaskItem>
          <TaskItem $w={66} $ml={4}><OperaIcon /></TaskItem>
          <TaskItem $w={66} $ml={3}><EyeIcon /></TaskItem>
          <TaskItem $w={66} $ml={4}><CalcIcon /></TaskItem>
          <TaskItem $w={66} $ml={5} $state="open"><BatIcon /></TaskItem>
          <TaskItem $w={66} $ml={4}><VsIcon /></TaskItem>
          <TaskItem $w={60} $ml={4} $state="open"><WifiIcon /></TaskItem>
          <TaskGrip $ml={2} />
          <TaskItem $w={65} $ml={2} $state="open"><TeamViewerIcon /></TaskItem>
          <TaskItem $w={65} $ml={5} $state="active"><ComputerIcon /></TaskItem>
          <Tray>
            <TrayLang>RU</TrayLang>
            <TrayIcon $w={16}>
              <svg width="10" height="7" viewBox="0 0 10 7"><path d="M5 0 L10 7 H0 Z" fill="#e8eef2" /></svg>
            </TrayIcon>
            <TrayIcon $w={20} $ml={16}><TrayDropbox /></TrayIcon>
            <TrayIcon $w={22} $ml={10}><TrayFlag /></TrayIcon>
            <TrayIcon $w={22} $ml={6}><TrayNet /></TrayIcon>
            <TrayIcon $w={22} $ml={8}><TraySound /></TrayIcon>
            <Clock>13:40</Clock>
            <ShowDesktop />
          </Tray>
        </Taskbar>
      </Screen>
    </>
  );
}
